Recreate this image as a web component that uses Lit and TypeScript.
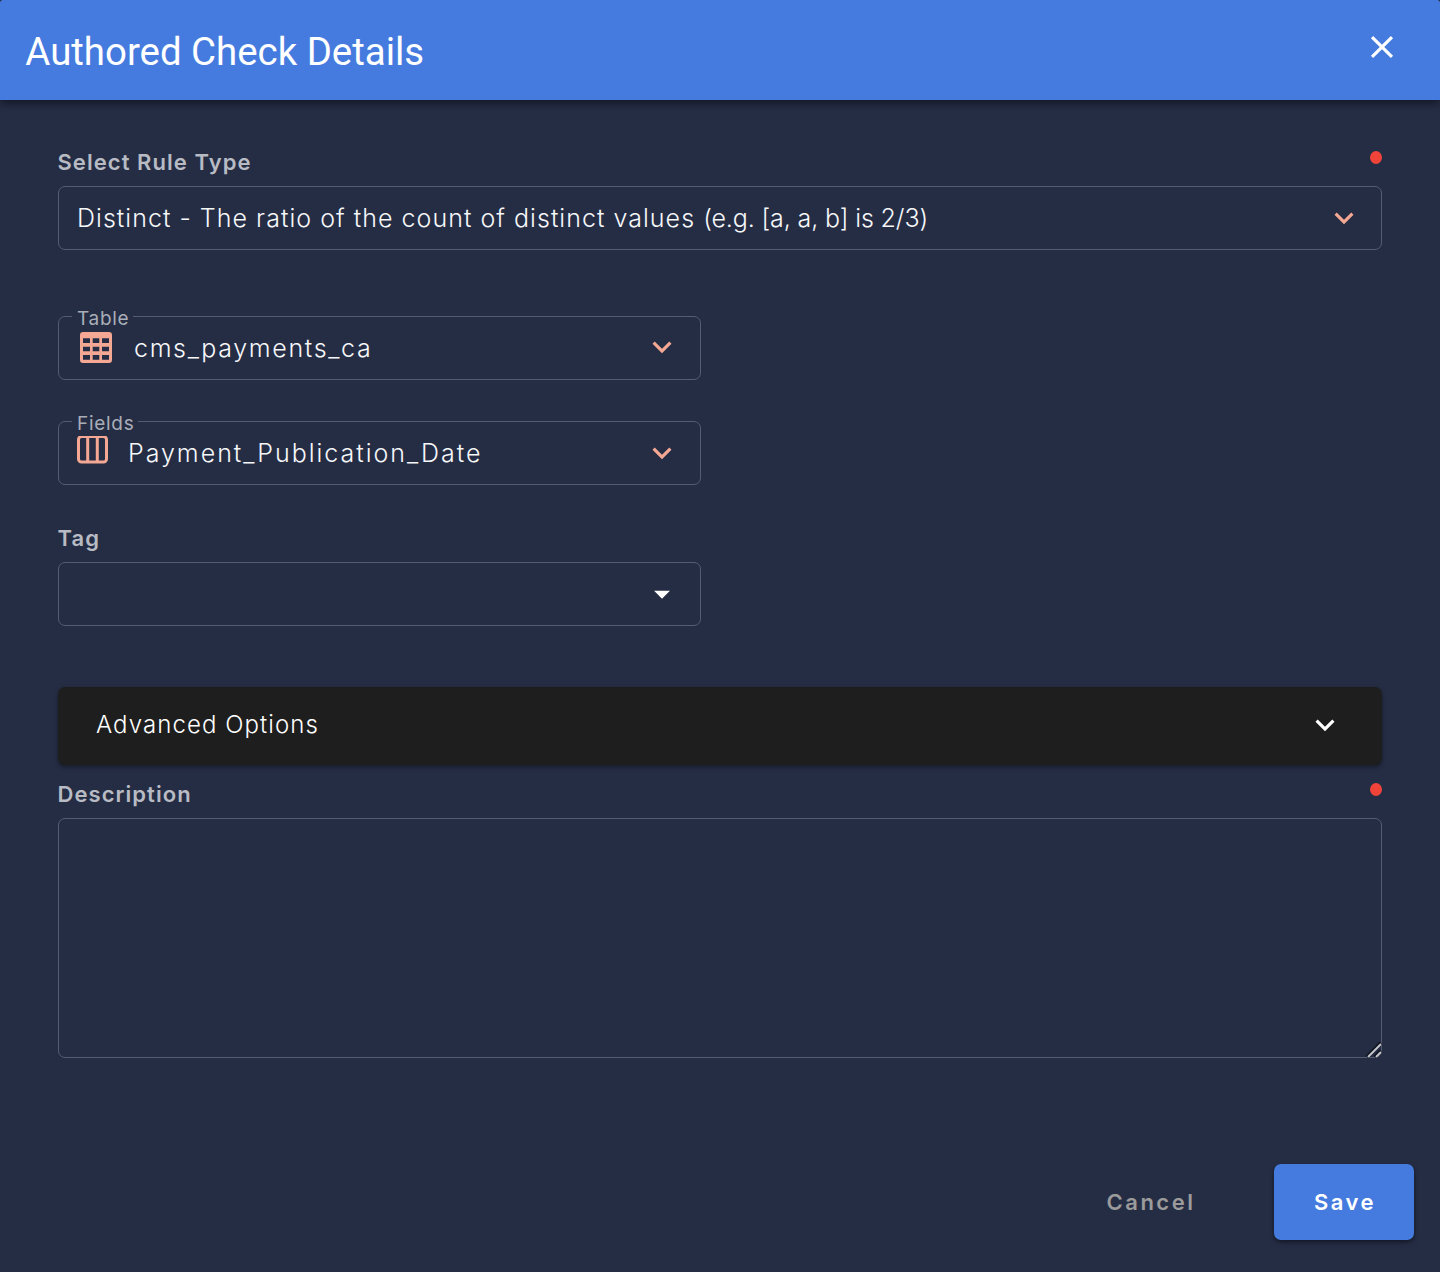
import { LitElement, html, css, nothing } from "lit";
import { customElement, property } from "lit/decorators.js";

@customElement("app-chevron")
export class AppChevron extends LitElement {
  static styles = css`
    :host { display: block; width: 38px; height: 38px; }
    .glyph { display: block; width: 38px; height: 38px; fill: currentColor; }
  `;
  render() {
    return html`<svg class="glyph" viewBox="0 0 24 24"><path d="M7.41 8.58 12 13.17l4.59-4.59L18 10l-6 6-6-6z"/></svg>`;
  }
}

@customElement("field-heading")
export class FieldHeading extends LitElement {
  @property() text = "";
  @property({ type: Boolean }) required = false;
  static styles = css`
    :host { display: flex; justify-content: space-between; height: 38px; }
    .text { margin-left: -0.5px; font-size: 22px; line-height: 28px; font-weight: 570; letter-spacing: 1.05px; color: #b8bbc3; }
    .dot { width: 12px; height: 13px; margin-top: 3px; border-radius: 50%; background: #f0443a; }
  `;
  render() {
    return html`<span class="text">${this.text}</span>
      ${this.required ? html`<span class="dot"></span>` : nothing}`;
  }
}

@customElement("app-root")
export class AppRoot extends LitElement {
  static styles = css`
    * { box-sizing: border-box; }
    :host { display: block; height: 1272px; overflow: hidden; background: #252d45; font-family: Inter, "Open Sans", sans-serif; }
    .dialog { display: flex; flex-direction: column; height: 1272px; background: #252d45; color: #fff; }
    .bar { display: flex; justify-content: space-between; height: 100px; padding: 0 39px 0 25.3px; background: #457bdf; border-radius: 3px 3px 0 0; box-shadow: 0 3px 8px rgba(0, 0, 0, 0.5); flex: none; }
    .title { margin: 0; font: 400 38.4px/104px Roboto, sans-serif; }
    .close { width: 38px; height: 38px; margin-top: 28px; fill: #fff; }
    .form { display: flex; flex-direction: column; padding: 48px 58px 0; flex: 1; }
    .box { display: flex; align-items: center; height: 64px; margin: 0; border: 1px solid #555c70; border-radius: 7px; padding: 0 18px; position: relative; }
    .half { width: 643px; padding-right: 19px; }
    .value { flex: 1; font-size: 25px; line-height: 32px; white-space: pre; font-weight: 350; color: #f6f7f9; }
    .v-rule { letter-spacing: 1.03px; }
    .example { letter-spacing: -0.12px; }
    .v-table { letter-spacing: 1.65px; }
    .v-fields { letter-spacing: 1.98px; }
    .accent { color: #f4a792; }
    .up { margin-top: -2px; }
    .rule { margin-bottom: 66px; }
    .table { margin-bottom: 41px; }
    .fields { margin-bottom: 39px; }
    .tag { margin-bottom: 61px; }
    .float { position: absolute; left: 13px; top: -10px; padding: 0 4px 0 5px; background: #252d45; font-size: 19px; line-height: 24px; letter-spacing: 0.7px; font-weight: 380; color: #a9adb7; }
    .grid-icon { width: 32px; height: 31px; margin: -2px 22px 0 3px; }
    .cols-icon { width: 31px; height: 29px; margin: -8px 20px 0 0; }
    .caret { width: 38px; height: 38px; fill: #fff; }
    .panel { display: flex; align-items: center; justify-content: space-between; height: 78px; padding: 0 38px 2px; background: #1e1e1e; border-radius: 7px; box-shadow: 0 2px 4px rgba(0, 0, 0, 0.4); margin-bottom: 15px; }
    .panel-text { font-size: 24px; font-weight: 350; letter-spacing: 1.08px; padding-bottom: 1px; }
    .area { display: flex; justify-content: flex-end; align-items: flex-end; height: 240px; border: 1px solid #555c70; border-radius: 7px; }
    .grip { width: 16px; height: 16px; margin: 0 -1px -1px 0; }
    .actions { display: flex; justify-content: flex-end; align-items: center; height: 76px; padding-right: 26px; margin-bottom: 32px; }
    .btn { display: flex; align-items: center; justify-content: center; height: 76px; border-radius: 7px; font-size: 22px; font-weight: 570; letter-spacing: 2.5px; }
    .cancel { width: 168px; margin-right: 39px; color: #9b9b9b; }
    .save { width: 140px; padding-left: 2px; background: #457bdf; box-shadow: 0 2px 5px rgba(0, 0, 0, 0.5); }
  `;

  render() {
    return html`
      <div class="dialog">
        <header class="bar">
          <h1 class="title">Authored Check Details</h1>
          <svg class="close" viewBox="0 0 24 24"><path d="M19 6.41 17.59 5 12 10.59 6.41 5 5 6.41 10.59 12 5 17.59 6.41 19 12 13.41 17.59 19 19 17.59 13.41 12z"/></svg>
        </header>
        <main class="form">
          <field-heading text="Select Rule Type" required></field-heading>
          <div class="box rule">
            <span class="value v-rule">Distinct - The ratio of the count of distinct values <span class="example">(e.g. [a, a, b] is 2/3)</span></span>
            <app-chevron class="accent"></app-chevron>
          </div>
          <div class="box half table">
            <span class="float">Table</span>
            <svg class="grid-icon" viewBox="0 0 32 31"><path fill="#f4a792" fill-rule="evenodd" d="M3 0H29a3 3 0 0 1 3 3V28a3 3 0 0 1-3 3H3a3 3 0 0 1-3-3V3a3 3 0 0 1 3-3ZM3 6.3V11H10V6.3ZM12.7 6.3V11H19.3V6.3ZM22 6.3V11H29V6.3ZM3 14.7V19.3H10V14.7ZM12.7 14.7V19.3H19.3V14.7ZM22 14.7V19.3H29V14.7ZM3 23V27.7H10V23ZM12.7 23V27.7H19.3V23ZM22 23V27.7H29V23Z"/></svg>
            <span class="value v-table">cms_payments_ca</span>
            <app-chevron class="accent up"></app-chevron>
          </div>
          <div class="box half fields">
            <span class="float">Fields</span>
            <svg class="cols-icon" viewBox="0 0 31 29"><g fill="none" stroke="#f4a792" stroke-width="3"><rect x="1.5" y="1.5" width="28" height="25.5" rx="3"/><path d="M10.7 2V27M20.3 2V27"/></g></svg>
            <span class="value v-fields">Payment_Publication_Date</span>
            <app-chevron class="accent"></app-chevron>
          </div>
          <field-heading text="Tag"></field-heading>
          <div class="box half tag">
            <span class="value"></span>
            <svg class="caret" viewBox="0 0 24 24"><path d="m7 10 5 5 5-5z"/></svg>
          </div>
          <section class="panel">
            <span class="panel-text">Advanced Options</span>
            <app-chevron></app-chevron>
          </section>
          <field-heading text="Description" required></field-heading>
          <div class="area">
            <svg class="grip" viewBox="0 0 16 16"><path d="M1 15 15 1M9 15l6-6" stroke="#101422" stroke-width="4"/><path d="M2 15 15 2M10 15l5-5" stroke="#c4c6cc" stroke-width="2"/></svg>
          </div>
        </main>
        <footer class="actions">
          <div class="btn cancel">Cancel</div>
          <div class="btn save">Save</div>
        </footer>
      </div>`;
  }
}
